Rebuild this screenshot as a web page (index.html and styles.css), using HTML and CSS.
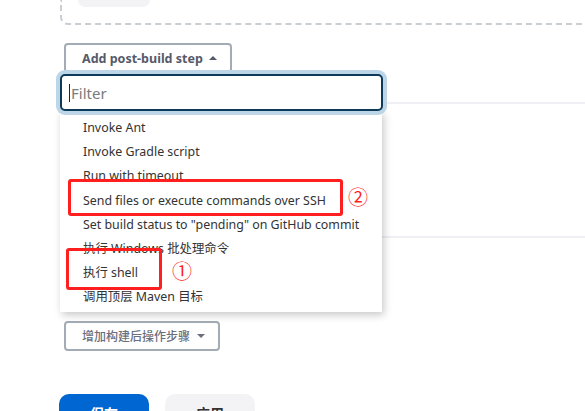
FILE: index.html
```html
<!DOCTYPE html>
<html lang="zh-CN">
<head>
<meta charset="utf-8">
<title>Post-build steps</title>
<link rel="stylesheet" href="styles.css">
</head>
<body>
<div class="page">
  <div class="prev-block"><div class="pill"></div></div>

  <div class="step-wrap">
    <button class="btn-outline btn-bold">Add post-build step <span class="tri-up"></span></button>
    <div class="dropdown">
      <div class="filter"><span class="cursor"></span><span class="placeholder">Filter</span></div>
      <ul class="menu">
        <li>Invoke Ant</li>
        <li>Invoke Gradle script</li>
        <li>Run with timeout</li>
        <li>Send files or execute commands over SSH</li>
        <li>Set build status to "pending" on GitHub commit</li>
        <li>执行 Windows 批处理命令</li>
        <li>执行 shell</li>
        <li>调用顶层 Maven 目标</li>
      </ul>
      <div class="mark mark-ssh"></div>
      <div class="num num-2">②</div>
      <div class="mark mark-shell"></div>
      <div class="num num-1">①</div>
    </div>
  </div>

  <div class="divider divider-a"></div>
  <div class="divider divider-b"></div>

  <button class="btn-outline btn-light">增加构建后操作步骤 <span class="tri-down"></span></button>

  <div class="actions">
    <button class="btn-primary">保存</button>
    <button class="btn-secondary">应用</button>
  </div>
</div>
</body>
</html>
```

FILE: styles.css
```css
* { box-sizing: border-box; }

html, body {
  margin: 0;
  padding: 0;
  background: #fff;
  overflow: hidden;
}

body {
  font-family: "Noto Sans", "Noto Sans CJK SC", sans-serif;
  color: #333;
  width: 585px;
  height: 411px;
}

.page {
  padding-left: 60px;
  display: flex;
  flex-direction: column;
  align-items: flex-start;
}

.prev-block {
  align-self: stretch;
  margin-right: -20px;
  height: 25px;
  border-left: 2px dashed #c9ced3;
  border-bottom: 2px dashed #c9ced3;
  border-bottom-left-radius: 8px;
  padding-left: 16px;
}

.pill {
  width: 72px;
  height: 7px;
  background: #f3f3f5;
  border-radius: 0 0 8px 8px;
}

.step-wrap {
  position: relative;
  margin-top: 18px;
  margin-left: 4px;
}

.btn-outline {
  display: flex;
  align-items: center;
  gap: 6px;
  height: 30px;
  padding: 0 0 0 15px;
  background: #fff;
  border: 2px solid #a3acb5;
  border-radius: 4px;
  font-family: "Noto Sans", "Noto Sans CJK SC", sans-serif;
  font-size: 13px;
  white-space: nowrap;
  cursor: pointer;
}

.btn-bold {
  font-weight: 700;
  color: #555a6b;
  width: 168px;
  font-size: 12.5px;
  padding-left: 16px;
}

.btn-light {
  margin-top: 83px;
  margin-left: 4px;
  width: 156px;
  color: #6b6f7d;
  font-weight: 500;
  font-size: 12px;
  padding-left: 16px;
  gap: 4px;
}

.tri-up {
  width: 0;
  height: 0;
  border-left: 4px solid transparent;
  border-right: 4px solid transparent;
  border-bottom: 4px solid #555a6b;
  margin-top: -1px;
}

.tri-down {
  width: 0;
  height: 0;
  border-left: 4px solid transparent;
  border-right: 4px solid transparent;
  border-top: 4px solid #6b6f7d;
  margin-left: 3px;
}

.dropdown {
  position: absolute;
  top: 31px;
  left: -4px;
  width: 323px;
  z-index: 5;
}

.filter {
  height: 37px;
  border: 2px solid #0d3a58;
  border-radius: 5px;
  box-shadow: 0 0 0 4px #bcd5e7;
  background: #fff;
  display: flex;
  align-items: center;
  padding-left: 7px;
  position: relative;
  z-index: 2;
}

.cursor {
  width: 1px;
  height: 18px;
  background: #222;
}

.placeholder {
  font-size: 15px;
  color: #7a7a7a;
  margin-left: 1px;
}

.menu {
  list-style: none;
  margin: 0;
  width: 322px;
  padding: 5px 0 2px 23px;
  background: #fff;
  box-shadow: 2px 3px 8px rgba(0, 0, 0, 0.22);
  position: relative;
  z-index: 1;
}

.menu li {
  height: 24.2px;
  line-height: 24px;
  font-size: 12.4px;
  color: #333;
  white-space: nowrap;
}

.mark {
  position: absolute;
  border: 3px solid #ff1f1f;
  border-radius: 3px;
  z-index: 3;
}

.mark-ssh {
  left: 8px;
  top: 105px;
  width: 275px;
  height: 37px;
}

.mark-shell {
  left: 6px;
  top: 174px;
  width: 96px;
  height: 42px;
}

.num {
  position: absolute;
  color: #ff1f1f;
  font-family: "Noto Sans CJK SC", sans-serif;
  font-size: 20px;
  line-height: 20px;
  z-index: 3;
}

.num-2 { left: 288px; top: 113px; }
.num-1 { left: 112px; top: 187px; }

.divider {
  align-self: stretch;
  height: 2px;
  background: #f0f0f4;
}

.divider-a { margin-top: 29px; }
.divider-b { margin-top: 132px; }

.actions {
  display: flex;
  gap: 16px;
  margin-top: 43px;
  margin-left: -1px;
}

.btn-primary,
.btn-secondary {
  width: 90px;
  height: 38px;
  border: none;
  border-radius: 10px;
  font-family: "Noto Sans CJK SC", sans-serif;
  font-size: 14px;
  font-weight: 700;
  padding: 0;
}

.btn-primary {
  background: #0066d1;
  color: #fff;
}

.btn-secondary {
  background: #f3f3f6;
  color: #333;
}
```
